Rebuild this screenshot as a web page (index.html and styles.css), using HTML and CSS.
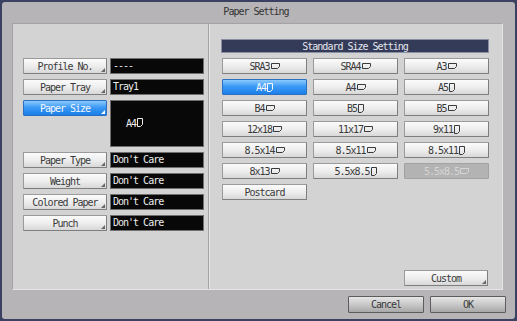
FILE: index.html
```html
<!DOCTYPE html>
<html lang="en">
<head>
    <meta charset="UTF-8">
    <title>Paper Setting</title>
    <link rel="stylesheet" href="styles.css">
</head>
<body>
    <div class="window">
        <div class="title">Paper Setting</div>

        <div class="panel">
            <div class="left">
                <div class="row">
                    <button class="btn key">Profile No.</button>
                    <div class="value">----</div>
                </div>
                <div class="row">
                    <button class="btn key">Paper Tray</button>
                    <div class="value">Tray1</div>
                </div>
                <div class="row size-row">
                    <button class="btn key selected">Paper Size</button>
                    <div class="value big">A4<svg class="ico por" viewBox="0 0 6 9"><path d="M0.5 0.5H5.5V6.5L3.5 8.5H0.5Z"/></svg></div>
                </div>
                <div class="row">
                    <button class="btn key">Paper Type</button>
                    <div class="value">Don't Care</div>
                </div>
                <div class="row">
                    <button class="btn key">Weight</button>
                    <div class="value">Don't Care</div>
                </div>
                <div class="row">
                    <button class="btn key">Colored Paper</button>
                    <div class="value">Don't Care</div>
                </div>
                <div class="row">
                    <button class="btn key">Punch</button>
                    <div class="value">Don't Care</div>
                </div>
            </div>

            <div class="right">
                <div class="header">Standard Size Setting</div>
                <div class="sizes">
                    <button class="btn">SRA3<svg class="ico land" viewBox="0 0 9 6"><path d="M0.5 0.5H8.5V3.5L6.5 5.5H0.5Z"/></svg></button>
                    <button class="btn">SRA4<svg class="ico land" viewBox="0 0 9 6"><path d="M0.5 0.5H8.5V3.5L6.5 5.5H0.5Z"/></svg></button>
                    <button class="btn">A3<svg class="ico land" viewBox="0 0 9 6"><path d="M0.5 0.5H8.5V3.5L6.5 5.5H0.5Z"/></svg></button>

                    <button class="btn selected">A4<svg class="ico por" viewBox="0 0 6 9"><path d="M0.5 0.5H5.5V6.5L3.5 8.5H0.5Z"/></svg></button>
                    <button class="btn">A4<svg class="ico land" viewBox="0 0 9 6"><path d="M0.5 0.5H8.5V3.5L6.5 5.5H0.5Z"/></svg></button>
                    <button class="btn">A5<svg class="ico por" viewBox="0 0 6 9"><path d="M0.5 0.5H5.5V6.5L3.5 8.5H0.5Z"/></svg></button>

                    <button class="btn">B4<svg class="ico land" viewBox="0 0 9 6"><path d="M0.5 0.5H8.5V3.5L6.5 5.5H0.5Z"/></svg></button>
                    <button class="btn">B5<svg class="ico por" viewBox="0 0 6 9"><path d="M0.5 0.5H5.5V6.5L3.5 8.5H0.5Z"/></svg></button>
                    <button class="btn">B5<svg class="ico land" viewBox="0 0 9 6"><path d="M0.5 0.5H8.5V3.5L6.5 5.5H0.5Z"/></svg></button>

                    <button class="btn">12x18<svg class="ico land" viewBox="0 0 9 6"><path d="M0.5 0.5H8.5V3.5L6.5 5.5H0.5Z"/></svg></button>
                    <button class="btn">11x17<svg class="ico land" viewBox="0 0 9 6"><path d="M0.5 0.5H8.5V3.5L6.5 5.5H0.5Z"/></svg></button>
                    <button class="btn">9x11<svg class="ico por" viewBox="0 0 6 9"><path d="M0.5 0.5H5.5V6.5L3.5 8.5H0.5Z"/></svg></button>

                    <button class="btn">8.5x14<svg class="ico land" viewBox="0 0 9 6"><path d="M0.5 0.5H8.5V3.5L6.5 5.5H0.5Z"/></svg></button>
                    <button class="btn">8.5x11<svg class="ico land" viewBox="0 0 9 6"><path d="M0.5 0.5H8.5V3.5L6.5 5.5H0.5Z"/></svg></button>
                    <button class="btn">8.5x11<svg class="ico por" viewBox="0 0 6 9"><path d="M0.5 0.5H5.5V6.5L3.5 8.5H0.5Z"/></svg></button>

                    <button class="btn">8x13<svg class="ico land" viewBox="0 0 9 6"><path d="M0.5 0.5H8.5V3.5L6.5 5.5H0.5Z"/></svg></button>
                    <button class="btn">5.5x8.5<svg class="ico por" viewBox="0 0 6 9"><path d="M0.5 0.5H5.5V6.5L3.5 8.5H0.5Z"/></svg></button>
                    <button class="btn disabled">5.5x8.5<svg class="ico land" viewBox="0 0 9 6"><path d="M0.5 0.5H8.5V3.5L6.5 5.5H0.5Z"/></svg></button>

                    <button class="btn">Postcard</button>
                </div>
                <div class="custom-row">
                    <button class="btn key custom">Custom</button>
                </div>
            </div>
        </div>

        <div class="footer">
            <button class="btn dark">Cancel</button>
            <button class="btn dark">OK</button>
        </div>
    </div>
</body>
</html>
```

FILE: styles.css
```css
* { box-sizing: border-box; }

body {
    margin: 0;
    background: #3b4160;
    font-family: "DejaVu Sans Mono", "Liberation Mono", monospace;
    font-size: 10px;
    letter-spacing: -1px;
}

.window {
    width: 517px;
    height: 321px;
    background: #b6b4b7;
    border: 2px solid #3b4160;
    border-radius: 5px;
    display: flex;
    flex-direction: column;
}

.title {
    height: 21px;
    line-height: 20px;
    text-align: center;
    color: #333;
    padding-right: 5px;
}

.panel {
    margin: 0 12px 0 10px;
    height: 267px;
    background: #d3d3d3;
    border-top: 1px solid #a3a3a3;
    border-left: 1px solid #a3a3a3;
    border-right: 1px solid #e4e4e4;
    border-bottom: 1px solid #e4e4e4;
    display: flex;
}

.left {
    width: 196px;
    padding: 34px 0 0 10px;
    display: flex;
    flex-direction: column;
    gap: 5px;
    border-right: 1px solid #a3a3a3;
}

.row {
    display: flex;
    gap: 3px;
    height: 16px;
}
.size-row { height: 47px; }

.btn {
    font: inherit;
    letter-spacing: inherit;
    color: #3a3a3a;
    margin: 0;
    padding: 0;
    height: 16px;
    border: 1px solid #9a9a9a;
    border-bottom-color: #7e7e7e;
    border-right-color: #7e7e7e;
    border-radius: 1px;
    background: linear-gradient(#fbfbfb, #ececec 55%, #d8d8d8);
    display: flex;
    align-items: center;
    justify-content: center;
    position: relative;
}

.key { width: 84px; }
.key::after {
    content: "";
    position: absolute;
    right: 1px;
    bottom: 1px;
    border-style: solid;
    border-width: 0 0 4px 4px;
    border-color: transparent transparent #666 transparent;
}

.btn.selected {
    color: #f4f8ff;
    border-color: #2a6fc0;
    background: linear-gradient(#8ccaff, #3d9af5 45%, #1a7fe9);
}
.key.selected::after { border-bottom-color: #fff; }

.btn.disabled {
    color: #d6d6d6;
    border-color: #a2a2a2;
    background: #b3b3b3;
}

.value {
    width: 94px;
    height: 16px;
    background: #080808;
    border: 1px solid #6f6f6f;
    color: #ececec;
    padding-left: 2px;
    line-height: 14px;
}
.value.big {
    height: 47px;
    padding: 16px 0 0 15px;
}

.ico {
    fill: none;
    stroke: currentColor;
    stroke-width: 1;
    margin-left: 1px;
}
.ico.land { width: 9px; height: 6px; }
.ico.por { width: 6px; height: 9px; }

.right {
    flex: 1;
    border-left: 1px solid #e6e6e6;
    padding: 15px 0 3px 11px;
    display: flex;
    flex-direction: column;
}

.header {
    width: 268px;
    height: 14px;
    line-height: 13px;
    background: #343b58;
    color: #e4e6ee;
    text-align: center;
    border: 1px solid #8a8fa3;
    margin-bottom: 5px;
}

.sizes {
    display: grid;
    grid-template-columns: repeat(3, 85px);
    column-gap: 6px;
    row-gap: 5px;
    padding-left: 1px;
}
.sizes .btn { width: 85px; }

.custom-row {
    margin-top: auto;
    display: flex;
    padding-left: 183px;
}
.custom { width: 84px; }

.footer {
    flex: 1;
    display: flex;
    justify-content: flex-end;
    align-items: center;
    gap: 6px;
    padding: 0 9px 1px 0;
}

.btn.dark {
    width: 76px;
    height: 17px;
    border-color: #5c5c5c;
    background: linear-gradient(#e6e6e6, #c8c8c8 50%, #a8a8a8);
}
```
